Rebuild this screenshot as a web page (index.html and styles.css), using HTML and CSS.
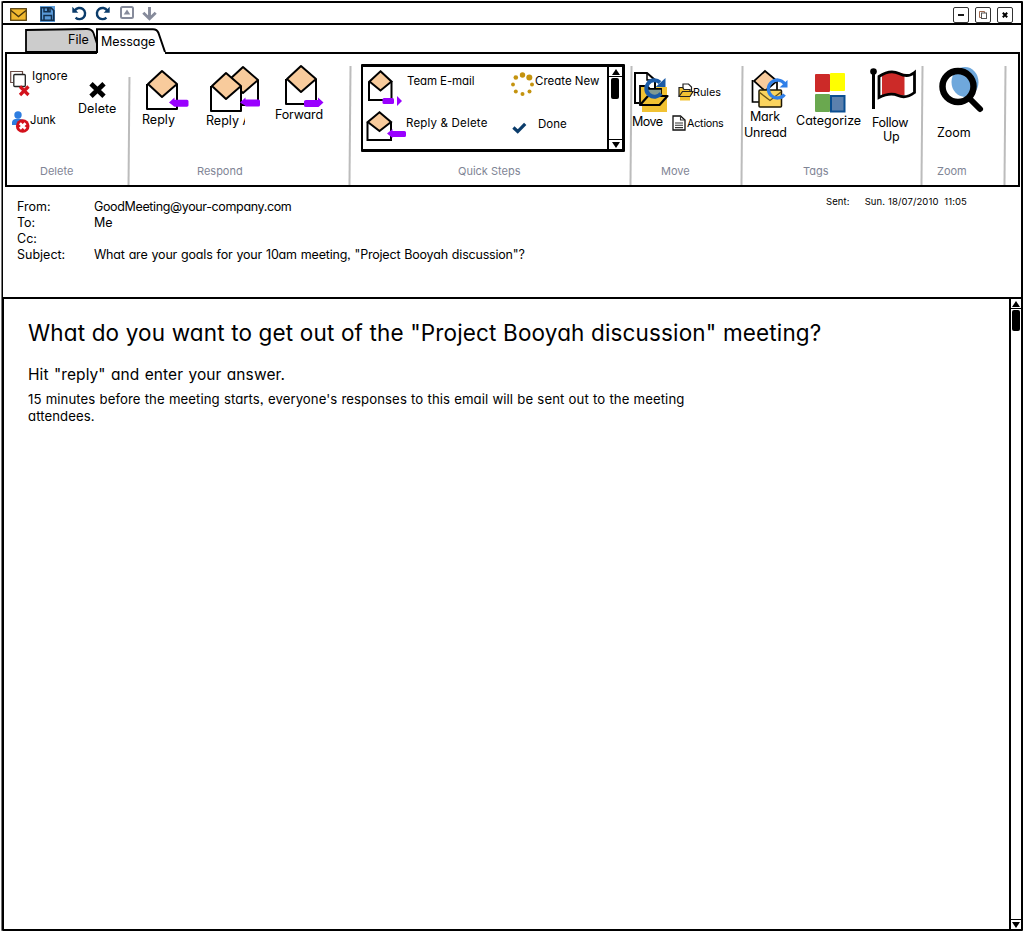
FILE: index.html
```
<!DOCTYPE html>
<html lang="en">
<head>
<meta charset="utf-8">
<title>Message</title>
<link rel="stylesheet" href="styles.css">
</head>
<body>
<svg width="0" height="0" class="defs">
  <defs>
    <g id="envelope" stroke="#000" stroke-width="2" stroke-linejoin="round">
      <path d="M2 14V39H32V14" fill="#fff"/>
      <path d="M17 1L32 14L17 27L3 14Z" fill="#f8cb9c"/>
    </g>
  </defs>
</svg>
<div class="window">
  <header class="titlebar">
    <svg class="tb-mail" width="17" height="13" viewBox="0 0 17 13"><rect x=".7" y=".7" width="15.6" height="11.6" fill="#f1b92f" stroke="#5a4310" stroke-width="1.3"/><path d="M1 2.5L8.500 8.500L16 2.500" fill="none" stroke="#4a380e" stroke-width="1.4"/></svg>
    <svg class="tb-save" width="15" height="16" viewBox="0 0 15 16"><rect y="0" width="15" height="16" fill="#5a9ad8"/><path d="M1.200 1.800H11L13.800 4.500V14.200H1.200Z" fill="#5a9ad8" stroke="#12304f" stroke-width="1.600"/><path d="M4 1.500V5.800H10V1.500M4 14V9.500H11.500V14" fill="none" stroke="#12304f" stroke-width="1.500"/><rect x="7" y="2" width="2" height="3" fill="#12304f"/></svg>
    <svg class="tb-undo" width="15" height="15" viewBox="0 0 15 15"><path d="M2.800 4.500A5.600 5.600 0 1 1 3.600 11.600" fill="none" stroke="#0b3c6b" stroke-width="2.400"/><path d="M.3 .8V6.800H6.300Z" fill="#0b3c6b"/></svg>
    <svg class="tb-redo" width="15" height="15" viewBox="0 0 15 15"><path d="M12.200 4.500A5.600 5.600 0 1 0 11.400 11.600" fill="none" stroke="#0b3c6b" stroke-width="2.400"/><path d="M14.700 .8V6.800H8.700Z" fill="#0b3c6b"/></svg>
    <svg class="tb-up" width="14" height="13" viewBox="0 0 14 13"><rect x="1" y="1" width="12" height="11" rx="1.500" fill="none" stroke="#868b9b" stroke-width="2"/><path d="M7 3.500L10.300 8.500H3.700Z" fill="#868b9b"/></svg>
    <svg class="tb-down" width="15" height="14" viewBox="0 0 15 14"><path d="M7.500 0V11M1.300 5.700L7.500 11.800L13.700 5.700" fill="none" stroke="#868b9b" stroke-width="2.900"/></svg>
    <div class="win-buttons">
      <span class="win-btn"><svg width="14" height="14" viewBox="0 0 14 14"><path d="M4 7H10" stroke="#000" stroke-width="1.800"/></svg></span>
      <span class="win-btn"><svg width="14" height="14" viewBox="0 0 14 14"><path d="M5 9.500H3.500V3.500H8.500V5" fill="none" stroke="#a06a50"/><rect x="5.500" y="5" width="5" height="5.500" fill="#fff" stroke="#555"/></svg></span>
      <span class="win-btn"><svg width="14" height="14" viewBox="0 0 14 14"><path d="M4.800 4.800L9.200 9.200M9.200 4.800L4.800 9.200" stroke="#000" stroke-width="2"/></svg></span>
    </div>
  </header>
  <nav class="tabs">
    <div class="tab tab-file"><svg width="75" height="25" viewBox="0 0 75 25"><path d="M1 24V2L62 1Q67 1 68.500 5L73 19V24Z" fill="#ccc" stroke="#000" stroke-width="1.800"/></svg><span>File</span></div>
    <div class="tab tab-message"><svg width="70" height="26" viewBox="0 0 70 26"><path d="M1 26V1H57Q61 1 62.500 5L69 24V26Z" fill="#fff"/><path d="M1 25V1.300H57Q61 1.300 62.500 5L69 24" fill="none" stroke="#000" stroke-width="2"/></svg><span>Message</span></div>
  </nav>
  <section class="ribbon">
    <div class="group g-delete">
      <div class="tools">
        <div class="stack">
          <div class="row ignore"><svg width="20" height="27" viewBox="0 0 20 27"><path d="M3 12.500H.7V1.500H12.500V5" fill="none" stroke="#6b4b45" stroke-width="1.200"/><rect x="3.800" y="4.500" width="11.500" height="12" rx="1" fill="#fff" stroke="#222" stroke-width="1.300"/><path d="M10 16.500L18.500 25M18.500 16.500L10 25" stroke="#d3121c" stroke-width="3.200"/></svg><span>Ignore</span></div>
          <div class="row junk"><svg width="18" height="22" viewBox="0 0 18 22"><circle cx="6" cy="4" r="3.700" fill="#2e7de0"/><path d="M0 14V11Q1 7.500 6 7.800Q11 7.500 12 11V14Z" fill="#2e7de0"/><circle cx="10.700" cy="15" r="6.800" fill="#d3121c"/><path d="M7.900 12.200L13.500 17.800M13.500 12.200L7.900 17.800" stroke="#fff" stroke-width="2.700"/></svg><span>Junk</span></div>
        </div>
        <div class="tool delete"><svg width="17" height="16" viewBox="0 0 17 16"><path d="M2 1.800L15 14.200M15 1.800L2 14.200" stroke="#000" stroke-width="4.800"/></svg><span>Delete</span></div>
      </div>
      <h3>Delete</h3>
    </div>
    <i class="sep first"></i>
    <div class="group g-respond">
      <div class="tools">
        <div class="tool reply"><svg width="45" height="41" viewBox="0 0 45 41"><use href="#envelope"/><path d="M24 32.500L29.500 27.500V29.700H42Q43.500 29.700 43.500 31.200V35.300Q43.500 36.700 42 36.700H30Q28.500 36.700 28.500 36Z" fill="#9900ff"/></svg><span>Reply</span></div>
        <div class="tool reply-all"><svg width="51" height="47" viewBox="0 0 51 47"><use href="#envelope" x="16" y="0"/><use href="#envelope" x="-1" y="6"/><path d="M30 36.500L35.500 31.500V33.500H48.500Q50 33.500 50 35V39Q50 40.500 48.500 40.500H36.500Q35 40.500 35 39.500Z" fill="#9900ff"/></svg><span>Reply All</span></div>
        <div class="tool forward"><svg width="40" height="43" viewBox="0 0 40 43"><use href="#envelope" x="-1"/><path d="M38.500 37.500L33 32.500V35H21Q19 35 19 36.500V40.500Q19 42 21 42H33.500Z" fill="#9900ff"/></svg><span>Forward</span></div>
      </div>
      <h3>Respond</h3>
    </div>
    <i class="sep"></i>
    <div class="group g-quick">
      <div class="quick-box">
        <div class="quick-list">
          <div class="row team"><svg width="38" height="36" viewBox="0 0 38 36"><path d="M2 11.500V30H24.500V11.500" fill="#fff" stroke="#000" stroke-width="2"/><path d="M13.500 1.300L24.500 11.500L13.500 20.500L2.500 11.500Z" fill="#f8cb9c" stroke="#000" stroke-width="2"/><rect x="15.500" y="28" width="11.500" height="6" rx="1.500" fill="#9900ff"/><path d="M30 26L35 31L30 36Z" fill="#9900ff"/></svg><span>Team E-mail</span></div>
          <div class="row create"><svg width="24" height="25" viewBox="0 0 24 25" fill="#c4930f"><circle cx="11.500" cy="3" r="2.700"/><circle cx="18.300" cy="5.500" r="3"/><circle cx="21" cy="12.500" r="2"/><circle cx="18.500" cy="19.500" r="2"/><circle cx="11.500" cy="22" r="2"/><circle cx="4.800" cy="19.500" r="2"/><circle cx="2" cy="12.500" r="1.900"/><circle cx="4.800" cy="5.500" r="2.300"/></svg><span>Create New</span></div>
          <div class="row reply-del"><svg width="41" height="31" viewBox="0 0 41 31"><path d="M1.500 11V29H25V11" fill="#fff" stroke="#000" stroke-width="2"/><path d="M13.500 1.300L25 11L13.500 20L1.800 11Z" fill="#f8cb9c" stroke="#000" stroke-width="2"/><path d="M21 22.500L26.500 18V20H38.500Q40 20 40 21.500V24.500Q40 26 38.500 26H26.500V27Z" fill="#9900ff"/></svg><span>Reply &amp; Delete</span></div>
          <div class="row done"><svg width="15" height="12" viewBox="0 0 15 12"><path d="M1.400 5.500L5.700 9.500L13.200 1.800" fill="none" stroke="#0b3c6b" stroke-width="3.200"/></svg><span>Done</span></div>
        </div>
        <div class="scroll quick-scroll"><b class="sb"><svg width="8" height="6"><path d="M4 0L8 6H0Z"/></svg></b><i class="thumb"></i><b class="sb down"><svg width="8" height="6"><path d="M4 6L8 0H0Z"/></svg></b></div>
      </div>
      <h3>Quick Steps</h3>
    </div>
    <i class="sep"></i>
    <div class="group g-move">
      <div class="tools">
        <div class="tool move"><svg width="37" height="42" viewBox="0 0 37 42"><rect x="9" y="15" width="25" height="25" fill="#f1c232"/><path d="M6 31H2V1H14L22 8V16" fill="#fff" stroke="#000" stroke-width="2"/><path d="M14 1V8H22" fill="none" stroke="#000" stroke-width="1.500"/><path d="M7 33V14H14L17 17H28V25" fill="#f1c232" stroke="#000" stroke-width="1.800"/><path d="M7 33L15 24H34.500L26.500 33Z" fill="#f1c232" stroke="#000" stroke-width="2.200" stroke-linejoin="round"/><path d="M14 17H28V24H14Z" fill="#7f9a92"/><path d="M13 17H28" stroke="#000" stroke-width="1.500"/><path d="M28 21.500A8.200 8.200 0 1 1 27 10.500" fill="none" stroke="#1b5ba6" stroke-width="4"/><path d="M32.500 6V15H22.500Z" fill="#1b5ba6"/></svg><span>Move</span></div>
        <div class="stack">
          <div class="row rules"><svg width="16" height="18" viewBox="0 0 16 18"><rect x="2" y="6" width="10" height="11.500" fill="#f1c232"/><path d="M5 7V1H10.500L13.500 4V9" fill="#fff" stroke="#222" stroke-width="1.200"/><path d="M1 13V4.500H4.500L6 6.500H12V9" fill="#f1c232" stroke="#222" stroke-width="1.200"/><path d="M1 13.500L4.500 8.500H15L12 13.500Z" fill="#f1c232" stroke="#222" stroke-width="1.200"/></svg><span>Rules</span></div>
          <div class="row actions"><svg width="14" height="16" viewBox="0 0 14 16"><path d="M1 1H8.500L13 5V15H1Z" fill="#fff" stroke="#111" stroke-width="1.300"/><path d="M8.500 1V5H13M3 8H11M3 10.300H11M3 12.600H11" fill="none" stroke="#333" stroke-width="1.100"/></svg><span>Actions</span></div>
        </div>
      </div>
      <h3>Move</h3>
    </div>
    <i class="sep"></i>
    <div class="group g-tags">
      <div class="tools">
        <div class="tool mark"><svg width="38" height="39" viewBox="0 0 38 39"><path d="M1.500 10V32H26V10" fill="#fff" stroke="#000" stroke-width="1.700"/><path d="M14 1L26 11L14 21L3 11Z" fill="#f8cb9c" stroke="#000" stroke-width="1.700"/><rect x="8" y="20" width="22.500" height="17" rx="1" fill="#fbd45e" stroke="#1d1705" stroke-width="1.500"/><path d="M8 22L19 30.500L30 22" fill="none" stroke="#6a5415" stroke-width="1.300"/><path d="M33.500 24.500A9 9 0 1 1 33.500 13.500" fill="none" stroke="#2f7fe8" stroke-width="3.300"/><path d="M36.500 10V17.500H28.500Z" fill="#2f7fe8"/></svg><span>Mark</span><span class="l2">Unread</span></div>
        <div class="tool categorize"><svg width="31" height="40" viewBox="0 0 31 40"><rect x="0" y="1" width="15" height="18" rx="1" fill="#cc2a28"/><rect x="15" y="0" width="15" height="18" rx="1" fill="#ff0"/><rect x="0" y="21" width="15" height="18" rx="1" fill="#6aa84f"/><rect x="16" y="23" width="13.500" height="15.500" fill="#5c80ad" stroke="#0b4e91" stroke-width="2"/></svg><span>Categorize</span></div>
        <div class="tool follow"><svg width="47" height="42" viewBox="0 0 47 42"><circle cx="3.500" cy="3.500" r="3.300"/><path d="M3.500 3V41" stroke="#000" stroke-width="3"/><path d="M9 8.500Q20 0 30 5T44.500 4.500V25.500Q36 31 29 28.500T9 30Z" fill="#fff"/><path d="M12 7Q22 2 30 5L34.500 6V27L30 28Q22 24 12 28Z" fill="#cc2a28"/><path d="M9 8.500Q20 1 29 5.500T44.500 4.500V24.500Q36 31 28 27.500T9 29.500Z" fill="none" stroke="#000" stroke-width="2.800"/></svg><span>Follow</span><span class="l2">Up</span></div>
      </div>
      <h3>Tags</h3>
    </div>
    <i class="sep"></i>
    <div class="group g-zoom">
      <div class="tools">
        <div class="tool zoom"><svg width="46" height="47" viewBox="0 0 46 47"><ellipse cx="26" cy="15" rx="13.500" ry="15" fill="#6fa8dc"/><path d="M30 31L41 42" stroke="#000" stroke-width="6" stroke-linecap="round"/><circle cx="19" cy="19.500" r="15.500" fill="none" stroke="#000" stroke-width="6.500"/></svg><span>Zoom</span></div>
      </div>
      <h3>Zoom</h3>
    </div>
    <i class="sep"></i>
  </section>
  <section class="headers">
    <dl>
      <dt>From:</dt><dd class="from">GoodMeeting@your-company.com</dd>
      <dt>To:</dt><dd>Me</dd>
      <dt>Cc:</dt><dd></dd>
      <dt>Subject:</dt><dd class="subject">What are your goals for your 10am meeting, "Project Booyah discussion"?</dd>
    </dl>
    <div class="sent"><span>Sent:</span><span>Sun. 18/07/2010&nbsp; 11:05</span></div>
  </section>
  <main class="body">
    <article>
      <h1>What do you want to get out of the "Project Booyah discussion" meeting?</h1>
      <h2>Hit "reply" and enter your answer.</h2>
      <p>15 minutes before the meeting starts, everyone's responses to this email will be sent out to the meeting<br>attendees.</p>
    </article>
    <div class="scroll main-scroll"><b class="sb"><svg width="8" height="6"><path d="M4 0L8 6H0Z"/></svg></b><i class="thumb"></i><b class="sb down"><svg width="8" height="6"><path d="M4 6L8 0H0Z"/></svg></b></div>
  </main>
</div>
</body>
</html>
```

FILE: styles.css
```
* { box-sizing: border-box; margin: 0; padding: 0; }
body {
  width: 1024px;
  height: 932px;
  overflow: hidden;
  background: #fff;
  color: #000;
  font-family: Inter, "Open Sans", sans-serif;
  font-feature-settings: "cv11", "ss03";
  font-size: 12.5px;
}
svg { display: block; flex: none; overflow: visible; }
.defs { position: absolute; }
.window {
  display: flex;
  flex-direction: column;
  width: 1021px;
  height: 930px;
  margin: 1px 0 0 2px;
  border: 2px solid #000;
  border-left-width: 1px;
  border-radius: 1px;
  box-shadow: -1px 0 0 #777;
}

/* Title bar */
.titlebar {
  display: flex;
  flex: 0 0 22px;
  align-items: flex-start;
  padding: 3px 8px 0 7px;
  border-bottom: 2px solid #000;
}
.tb-mail { margin-top: 2px; }
.tb-save { margin-left: 13px; }
.tb-undo { margin: -.5px 0 0 17px; }
.tb-redo { margin: -.5px 0 0 8px; }
.tb-up { margin: 0 0 0 10px; }
.tb-down { margin: 1px 0 0 8px; }
.win-buttons { display: flex; gap: 6px; margin: 1px 0 0 auto; }
.win-btn { width: 16px; height: 16px; border: 1px solid #333; border-radius: 2px; }

/* Tabs */
.tabs { display: flex; flex: 0 0 28px; z-index: 1; margin-bottom: -2px; padding: 3px 0 0 22px; }
.tab { display: grid; }
.tab > * { grid-area: 1 / 1; }
.tab span { line-height: 16px; }
.tab-file { width: 71px; }
.tab-file span { padding: 4px 0 0 43px; }
.tab-message { width: 70px; }
.tab-message span { padding: 6px 0 0 5px; }

/* Ribbon */
.ribbon {
  display: flex;
  flex: 0 0 135px;
  margin: 0 1px 0 2px;
  border: 2px solid #000;
  border-bottom-width: 2.500px;
}
.sep { width: 2px; height: 119px; margin-top: 12px; background: #bcbcbc; transform: skewX(-.5deg); }
.sep.first { height: 108px; margin-top: 23px; }
.group { display: flex; flex: none; flex-direction: column; white-space: nowrap; }
.group h3 { color: #7f8595; font-size: 11px; font-weight: 400; line-height: 14px; }
.tools { display: flex; align-items: flex-start; height: 110px; }
.tool { flex: none; }
.tool span, .row span { display: block; line-height: 14px; }
.row { display: flex; align-items: flex-start; }

.g-delete { width: 121px; }
.g-delete .stack { width: 71px; padding: 16px 0 0 3px; }
.ignore { height: 41px; font-size: 11.800px; }
.ignore span { margin: -1px 0 0 2px; }
.junk { padding-left: 2px; font-size: 11.200px; }
.junk span { margin: 2px 0 0 0; }
.delete { padding-top: 28px; }
.delete svg { margin-left: 11px; }
.delete span { margin-top: 4px; letter-spacing: .1px; }
.g-delete h3 { padding-left: 33px; }

.g-respond { width: 219px; }
.reply { width: 64px; padding: 16px 0 0 12px; }
.reply svg { margin-left: 3px; }
.reply span { margin-top: 2px; }
.reply-all { width: 81px; padding: 12px 0 0 12px; }
.reply-all svg { margin-left: 4px; }
.reply-all span { width: 38.500px; margin-top: 1px; overflow: hidden; }
.forward { padding-top: 11px; }
.forward svg { margin-left: 10px; }
.forward span { letter-spacing: -.15px; }
.g-respond h3 { padding-left: 67px; }

.g-quick { width: 279px; padding-top: 10px; }
.quick-box {
  display: flex;
  width: 264px;
  height: 88px;
  margin-left: 10px;
  border: 3px solid #000;
  border-left-width: 2px;
  border-radius: 1px;
}
.quick-list { display: grid; flex: 1; grid-template-columns: 148px 1fr; grid-template-rows: 43px 1fr; font-size: 11.500px; }
.team { padding: 3px 0 0 4px; }
.team span { margin: 4px 0 0 2px; letter-spacing: -.1px; }
.create { padding: 5px 0 0 0; }
.create span { margin: 2px 0 0 0; }
.reply-del { padding: 1px 0 0 3px; }
.reply-del span { margin: 5px 0 0 -1px; letter-spacing: .18px; }
.done { padding: 12px 0 0 1px; }
.done span { margin: -5px 0 0 11px; }
.g-quick h3 { padding: 12px 0 0 107px; }

.g-move { width: 109px; }
.move { width: 40px; padding: 18px 0 0 0; }
.move svg { margin-left: 1px; }
.move span { margin-top: 1px; letter-spacing: -.5px; }
.g-move .stack { padding-top: 29px; font-size: 10.800px; }
.rules { height: 32px; padding-left: 6px; }
.rules span { margin: 3px 0 0 -1px; }
.actions span { margin: 2px 0 0 1px; letter-spacing: -.25px; }
.g-move h3 { padding-left: 29px; }

.g-tags { width: 178px; }
.mark { width: 53px; padding: 16px 0 0 1px; }
.mark svg { margin-left: 7px; }
.mark span { margin: 1px 0 0 6px; letter-spacing: -.2px; }
.mark .l2 { margin: 2px 0 0; }
.categorize { width: 75px; padding-top: 19px; }
.categorize svg { margin-left: 19px; }
.categorize span { margin-top: 1px; }
.follow { padding-top: 14px; }
.follow svg { margin-left: -1px; }
.follow span { margin: 6px 0 0 1px; letter-spacing: -.3px; }
.follow .l2 { margin: 0 0 0 12px; }
.g-tags h3 { padding-left: 60px; }

.g-zoom { width: 81px; padding-left: 14px; }
.zoom { padding-top: 13px; }
.zoom svg { margin-left: 2px; }
.zoom span { margin-top: 12px; }

/* Scrollbars */
.scroll { display: flex; flex-direction: column; width: 15px; border-left: 2px solid #000; }
.sb { display: flex; flex: 0 0 10px; align-items: center; justify-content: center; border-bottom: 1.500px solid #000; }
.sb.down { margin-top: auto; border-top: 1.500px solid #000; border-bottom: 0; }
.thumb { width: 8px; height: 21px; margin: 1px 0 0 2px; background: #000; border-radius: 2px; }

/* Message headers */
.headers { display: flex; flex: 0 0 110px; justify-content: space-between; padding: 12px 54px 0 14px; }
dl { display: grid; grid-template-columns: 77px auto; grid-auto-rows: 16px; align-content: start; line-height: 16px; font-size: 12.500px; white-space: nowrap; }
.from { letter-spacing: -.36px; }
.subject { letter-spacing: -.2px; word-spacing: .7px; }
.sent { display: flex; gap: 15px; margin-top: -3px; font-size: 9.500px; line-height: 12px; letter-spacing: .12px; }

/* Message body */
.body { display: flex; flex: 1; border-top: 2.500px solid #000; border-left: 1px solid #000; }
article { flex: 1; padding: 19px 0 0 24px; white-space: nowrap; }
h1 { font-size: 22.500px; font-weight: 400; line-height: 30px; letter-spacing: .15px; }
h2 { margin-top: 17px; font-size: 15.500px; font-weight: 400; line-height: 20px; letter-spacing: .1px; word-spacing: .8px; }
p { margin-top: 6px; font-size: 13.200px; line-height: 17px; letter-spacing: .07px; word-spacing: .4px; }
.main-scroll { width: 12px; }
.main-scroll .thumb { margin-left: 1px; }
```
